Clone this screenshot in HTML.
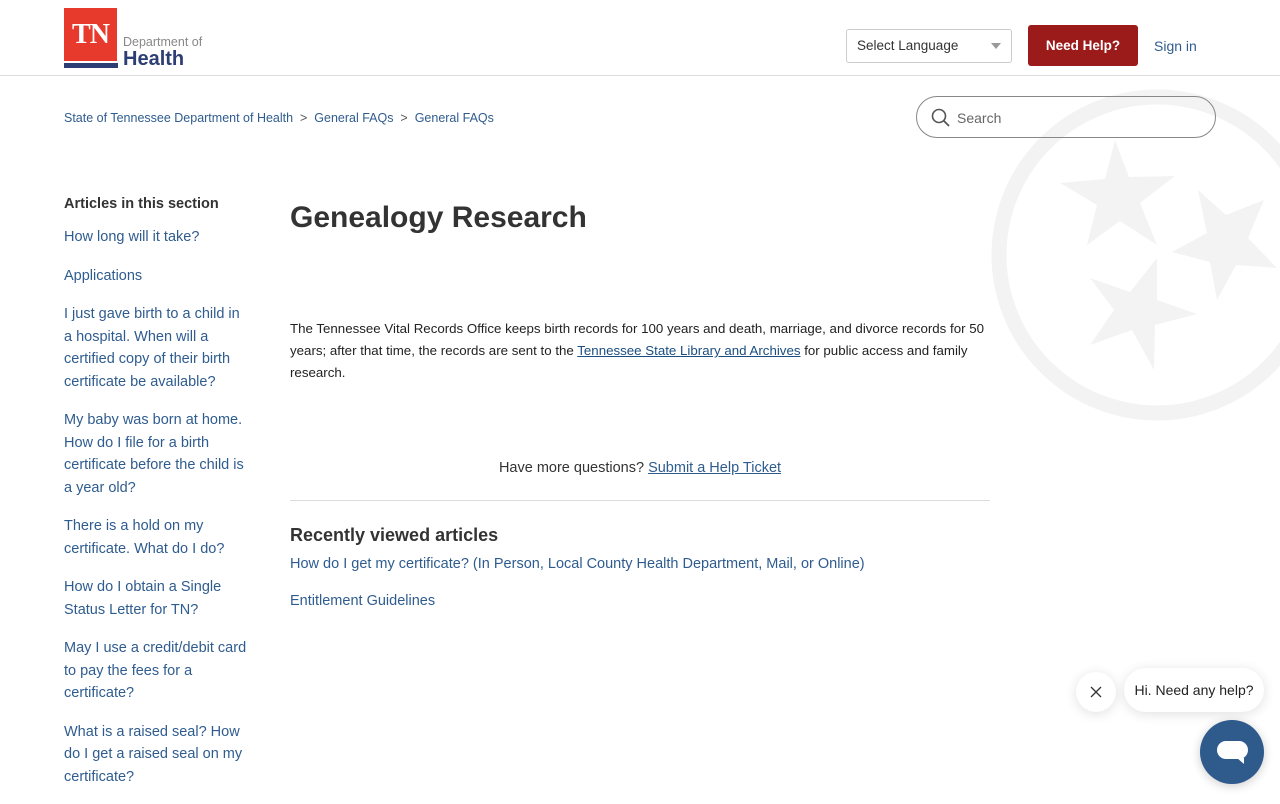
<!DOCTYPE html>
<html><head><meta charset="utf-8"><style>
*{box-sizing:border-box;margin:0;padding:0}
body{width:1280px;height:800px;overflow:hidden;background:#fff;font-family:"Liberation Sans",sans-serif;color:#333;position:relative}
a{color:#2f5c8f;text-decoration:none}
.hdr{height:76px;border-bottom:1px solid #ddd;position:relative}
.logo{position:absolute;left:64px;top:8px;width:53px;height:53px;background:#e8392d;color:#fff;font-family:"Liberation Serif",serif;font-size:28px;font-weight:bold;text-align:center;line-height:54px;letter-spacing:-1px}
.logobar{position:absolute;left:64px;top:63px;width:54px;height:5px;background:#2c3e73}
.dep{position:absolute;left:123px;top:35px;font-size:12.5px;color:#888}
.hl{position:absolute;left:123px;top:48px;font-size:20px;font-weight:bold;color:#2c3e73}
.sel{position:absolute;left:846px;top:29px;width:166px;height:34px;border:1px solid #ccc;border-radius:3px;font-size:13.5px;padding:8px 10px;color:#333}
.sel:after{content:"";position:absolute;right:10px;top:13px;border:5px solid transparent;border-top:6px solid #999}
.help{position:absolute;left:1028px;top:25px;width:110px;height:41px;background:#9b1b1b;color:#fff;font-weight:bold;font-size:13.5px;text-align:center;line-height:41px;border-radius:3px}
.sign{position:absolute;left:1154px;top:38px;font-size:14px;color:#2f5c8f}
.bc{position:absolute;left:64px;top:111px;font-size:12.5px;color:#555}
.bc a{color:#2f5c8f}
.search{position:absolute;left:916px;top:96px;width:300px;height:42px;border:1px solid #888;border-radius:21px;font-size:14px;color:#666;padding:13px 0 0 40px;background:transparent}
.side{position:absolute;left:64px;top:196px;width:187px}
.side h3{font-size:14.5px;font-weight:bold;color:#333;margin-bottom:14px}
.side a{display:block;font-size:14.5px;line-height:22.5px;margin-bottom:16px}
h1{position:absolute;left:290px;top:201px;font-size:30px;font-weight:bold;color:#333}
.body{position:absolute;left:290px;top:318px;width:700px;font-size:13.3px;line-height:22px;color:#222}
.body a{text-decoration:underline;color:#1a4d80}
.more{position:absolute;left:290px;top:460px;width:700px;text-align:center;font-size:14.5px;color:#333}
.more a{text-decoration:underline}
.hr{position:absolute;left:290px;top:500px;width:700px;border-top:1px solid #ddd}
.rv{position:absolute;left:290px;top:525px;font-size:18px;font-weight:bold;color:#333}
.rl{position:absolute;left:290px;font-size:14.5px}
.x{position:absolute;left:1076px;top:672px;width:40px;height:40px;border-radius:50%;background:#fff;box-shadow:0 2px 12px rgba(0,0,0,.12)}
.bub{position:absolute;left:1124px;top:668px;width:140px;height:44px;border-radius:22px;background:#fff;box-shadow:0 2px 12px rgba(0,0,0,.12);font-size:14px;color:#222;line-height:44px;text-align:center}
.chat{position:absolute;left:1200px;top:720px;width:64px;height:64px;border-radius:50%;background:#2f5a8c;box-shadow:0 2px 10px rgba(0,0,0,.2)}
</style></head><body>
<svg style="position:absolute;left:0;top:0" width="1280" height="800">
<circle cx="1157" cy="255" r="158" fill="none" stroke="#f3f3f3" stroke-width="15"/>
<g fill="#f3f3f3">
<polygon points="1115,140 1129,177 1175,176 1140,203 1157,245 1120,221 1087,245 1097,205 1060,183 1105,179"/>
<polygon points="1198,190 1226,215 1264,200 1248,238 1277,268 1236,265 1217,300 1210,262 1172,252 1207,233"/>
<polygon points="1157,258 1157,300 1197,314 1155,325 1154,370 1132,330 1090,345 1114,310 1090,278 1130,292"/>
</g></svg>
<div class="hdr">
<div class="logo">TN</div><div class="logobar"></div>
<div class="dep">Department of</div><div class="hl">Health</div>
<div class="sel">Select Language</div>
<div class="help">Need Help?</div>
<div class="sign">Sign in</div>
</div>
<div class="bc"><a>State of Tennessee Department of Health</a> &nbsp;&gt;&nbsp; <a>General FAQs</a> &nbsp;&gt;&nbsp; <a>General FAQs</a></div>
<div class="search">Search
<svg style="position:absolute;left:14px;top:11px" width="20" height="20"><circle cx="8" cy="8" r="6.5" fill="none" stroke="#555" stroke-width="1.6"/><line x1="13" y1="13" x2="18" y2="18" stroke="#555" stroke-width="1.8"/></svg></div>
<div class="side"><h3>Articles in this section</h3>
<a>How long will it take?</a><a>Applications</a>
<a>I just gave birth to a child in a hospital. When will a certified copy of their birth certificate be available?</a>
<a>My baby was born at home. How do I file for a birth certificate before the child is a year old?</a>
<a>There is a hold on my certificate. What do I do?</a>
<a>How do I obtain a Single Status Letter for TN?</a>
<a>May I use a credit/debit card to pay the fees for a certificate?</a>
<a>What is a raised seal? How do I get a raised seal on my certificate?</a>
</div>
<h1>Genealogy Research</h1>
<div class="body">The Tennessee Vital Records Office keeps birth records for 100 years and death, marriage, and divorce records for 50 years; after that time, the records are sent to the <a>Tennessee State Library and Archives</a> for public access and family research.</div>
<div class="more">Have more questions? <a>Submit a Help Ticket</a></div>
<div class="hr"></div>
<div class="rv">Recently viewed articles</div>
<a class="rl" style="top:556px">How do I get my certificate? (In Person, Local County Health Department, Mail, or Online)</a>
<a class="rl" style="top:593px">Entitlement Guidelines</a>
<div class="x"><svg width="40" height="40"><path d="M15 15L25 25M25 15L15 25" stroke="#333" stroke-width="1.3"/></svg></div>
<div class="bub">Hi. Need any help?</div>
<div class="chat"><svg width="64" height="64"><rect x="17" y="21" width="31" height="18" rx="9" fill="#fff"/><polygon points="37,38 44,38 44,44" fill="#fff"/></svg></div>
</body></html>
